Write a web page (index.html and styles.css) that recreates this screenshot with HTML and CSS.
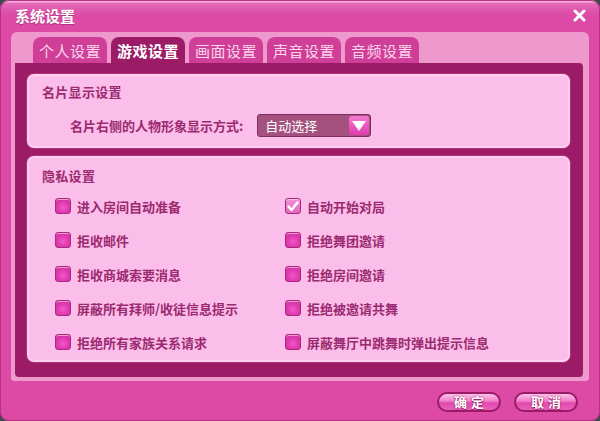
FILE: index.html
```html
<!DOCTYPE html>
<html lang="zh-CN">
<head>
    <meta charset="UTF-8">
    <title>系统设置</title>
    <link rel="stylesheet" href="styles.css">
</head>
<body>
    <!-- 设置窗口 -->
    <div class="window">
        <div class="titlebar">
            <span class="title">系统设置</span>
            <svg class="close" width="13" height="13" viewBox="0 0 13 13">
                <path d="M2 2 L11 11 M11 2 L2 11" stroke="#fff" stroke-width="3" stroke-linecap="round"/>
            </svg>
        </div>

        <div class="frame">
            <div class="tabs">
                <div class="tab">个人设置</div>
                <div class="tab active">游戏设置</div>
                <div class="tab">画面设置</div>
                <div class="tab">声音设置</div>
                <div class="tab">音频设置</div>
            </div>

            <div class="tab-panel">
                <!-- 名片 -->
                <div class="section card-section">
                    <div class="section-title">名片显示设置</div>
                    <div class="card-row">
                        <span>名片右侧的人物形象显示方式:</span>
                        <div class="select">
                            <span>自动选择</span>
                            <span class="arrow"></span>
                        </div>
                    </div>
                </div>

                <!-- 隐私 -->
                <div class="section privacy">
                    <div class="section-title">隐私设置</div>
                    <div class="options">
                        <label class="option"><span class="box"></span>进入房间自动准备</label>
                        <label class="option"><span class="box checked"><svg width="12" height="11" viewBox="0 0 12 11"><path d="M1.5 5.5 L4.5 9 L10.5 1.5" stroke="#fff" stroke-width="2.4" fill="none" stroke-linecap="round" stroke-linejoin="round"/></svg></span>自动开始对局</label>
                        <label class="option"><span class="box"></span>拒收邮件</label>
                        <label class="option"><span class="box"></span>拒绝舞团邀请</label>
                        <label class="option"><span class="box"></span>拒收商城索要消息</label>
                        <label class="option"><span class="box"></span>拒绝房间邀请</label>
                        <label class="option"><span class="box"></span>屏蔽所有拜师/收徒信息提示</label>
                        <label class="option"><span class="box"></span>拒绝被邀请共舞</label>
                        <label class="option"><span class="box"></span>拒绝所有家族关系请求</label>
                        <label class="option"><span class="box"></span>屏蔽舞厅中跳舞时弹出提示信息</label>
                    </div>
                </div>
            </div>
        </div>

        <div class="footer">
            <button class="btn">确定</button>
            <button class="btn">取消</button>
        </div>
    </div>
</body>
</html>
```

FILE: styles.css
```css
* {
    margin: 0;
    padding: 0;
    box-sizing: border-box;
    font-family: "Noto Sans CJK SC", "Noto Sans", sans-serif;
}

body {
    width: 600px;
    height: 421px;
    background: #3b4a4c;
    overflow: hidden;
}

/* 窗口外框 */
.window {
    width: 600px;
    height: 421px;
    border-radius: 9px;
    background: linear-gradient(#f9bde4 0, #f7b0dc 2px, #e66cbb 3px, #df56ac 10px, #dc4aa5 16px, #dc4aa5 100%);
    box-shadow: inset 0 0 0 1px #b82f84;
    display: flex;
    flex-direction: column;
}

.titlebar {
    height: 32px;
    display: flex;
    align-items: center;
    justify-content: space-between;
    padding: 0 14px 2px 15px;
}

.title {
    color: #fff;
    font-size: 15px;
    font-weight: 700;
    text-shadow: 0 1px 1px rgba(120, 20, 80, 0.5);
}

.close {
    margin-top: 1px;
}

/* 浅粉色底板 */
.frame {
    margin: 0 11px;
    height: 349px;
    background: #ef98cd;
    border-radius: 6px 6px 3px 3px;
    padding: 5px 6px 4px 4px;
    display: flex;
    flex-direction: column;
}

.tabs {
    display: flex;
    gap: 4px;
    padding-left: 18px;
}

.tab {
    width: 74px;
    height: 26px;
    border-radius: 8px 8px 0 0;
    background: #cf3f97;
    color: #fcd3ec;
    font-size: 15px;
    display: flex;
    align-items: center;
    justify-content: center;
    letter-spacing: 0.5px;
}

.tab.active {
    background: #9b1b66;
    color: #fff;
    font-weight: 700;
}

.tab-panel {
    flex: 1;
    background: #9b1b66;
    border-radius: 0 4px 4px 4px;
    padding: 11px 13px 15px 12px;
    display: flex;
    flex-direction: column;
    gap: 8px;
}

/* 设置分组 */
.section {
    background: #fbbde9;
    border: 2px solid #fdd2ef;
    border-radius: 7px;
    box-shadow: 0 0 0 1px #b3307e;
    color: #9c2a70;
    font-size: 13px;
    font-weight: 700;
}

.section-title {
    line-height: 18px;
    letter-spacing: 0.3px;
}

.card-section {
    height: 74px;
    padding: 7px 0 0 13px;
}

.card-row {
    margin-top: 12px;
    padding-left: 28px;
    display: flex;
    align-items: center;
    gap: 14px;
    height: 24px;
}

.select {
    width: 114px;
    height: 23px;
    background: #a4517f;
    border: 1px solid #7e2f5d;
    border-radius: 3px;
    color: #fff;
    font-weight: 400;
    display: flex;
    align-items: center;
    justify-content: space-between;
    padding: 0 1px 0 7px;
}

.arrow {
    width: 20px;
    height: 19px;
    border-radius: 3px;
    background: linear-gradient(#f47ad0, #e03bb0);
    position: relative;
}

.arrow::after {
    content: '';
    position: absolute;
    left: 3px;
    top: 5px;
    border-left: 7px solid transparent;
    border-right: 7px solid transparent;
    border-top: 10px solid #fff;
}

.privacy {
    height: 206px;
    padding: 9px 0 0 13px;
}

.options {
    margin-top: 4px;
    padding-left: 13px;
    display: grid;
    grid-template-columns: 230px 1fr;
    grid-auto-rows: 34px;
}

.option {
    display: flex;
    align-items: center;
    gap: 6px;
}

.box {
    width: 16px;
    height: 16px;
    border: 1px solid #a8287a;
    border-radius: 3px;
    background: radial-gradient(circle at 50% 60%, #f25ac6 0, #e23cb2 45%, #cc2c9e 100%);
    box-shadow: inset 0 1px 0 rgba(255, 220, 245, 0.6);
    display: flex;
    align-items: center;
    justify-content: center;
}

.box.checked {
    background: linear-gradient(#f28fd6, #e468bd);
}

/* 底部按钮 */
.footer {
    display: flex;
    justify-content: flex-end;
    gap: 13px;
    padding: 11px 22px 0 0;
}

.btn {
    width: 64px;
    height: 20px;
    border-radius: 10px;
    border: 2px solid #9b1b66;
    background: linear-gradient(#fcc2ea 0, #f27cc9 45%, #e04aae 55%, #e860ba 100%);
    color: #fff;
    font-size: 13px;
    font-weight: 700;
    letter-spacing: 4px;
    text-indent: 4px;
    text-shadow: 0 0 2px #9b1b66, 0 1px 1px #9b1b66;
    line-height: 16px;
}
```
